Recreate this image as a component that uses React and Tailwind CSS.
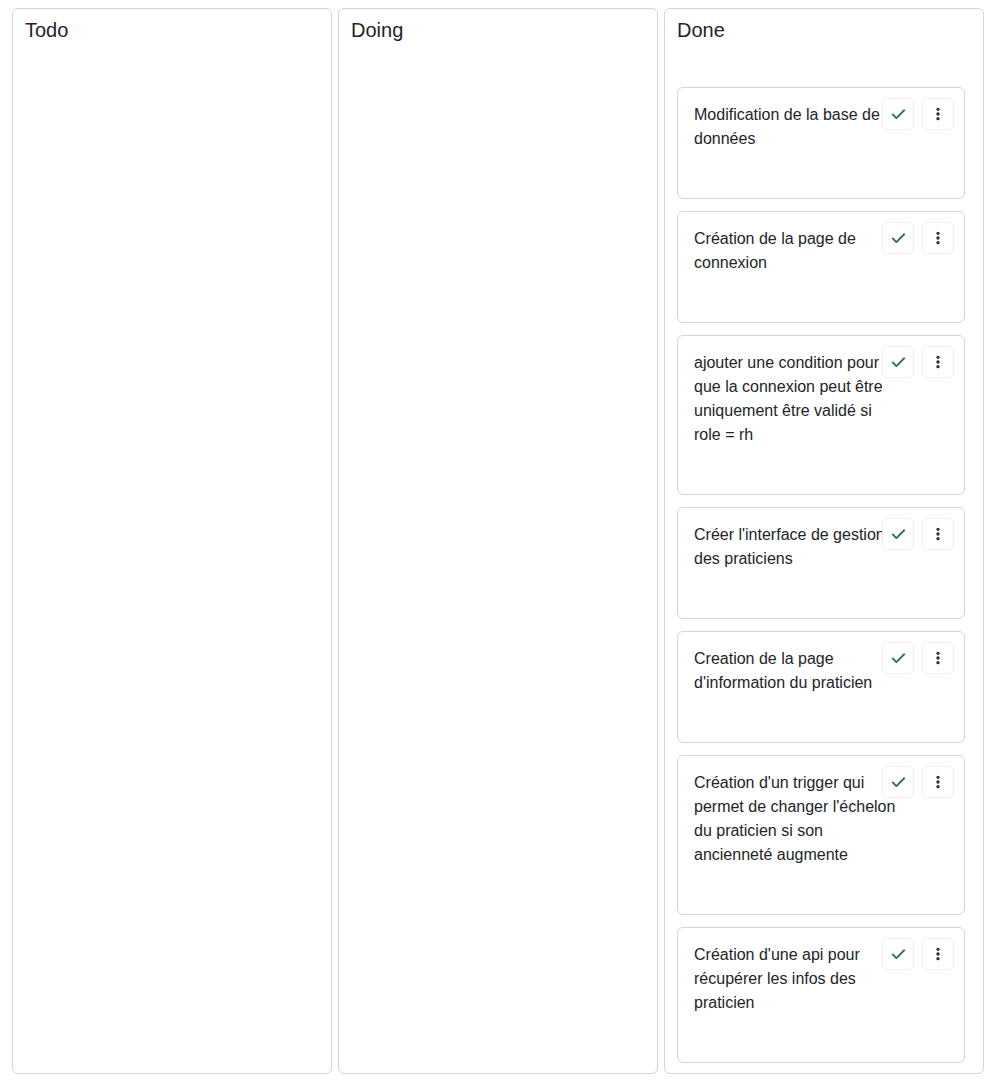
import { Check, EllipsisVertical } from 'lucide-react';

const columns = [
  { title: 'Todo', tasks: [] },
  { title: 'Doing', tasks: [] },
  {
    title: 'Done',
    tasks: [
      'Modification de la base de données',
      'Création de la page de connexion',
      'ajouter une condition pour que la connexion peut être uniquement être validé si role = rh',
      "Créer l'interface de gestion des praticiens",
      "Creation de la page d'information du praticien",
      "Création d'un trigger qui permet de changer l'échelon du praticien si son ancienneté augmente",
      "Création d'une api pour récupérer les infos des praticien",
    ],
  },
];

const TaskCard = ({ text }) => (
  <div className="relative rounded-[6px] border border-[#d4d4d4] bg-white pl-[16px] pr-[15px] pt-[15px] pb-[47px]">
    <p className="w-[204px] text-[16px] leading-[24px] text-[#212529]">{text}</p>
    <div className="absolute right-[10px] top-[10px] flex gap-2">
      <button className="flex h-8 w-8 items-center justify-center rounded-[5px] border border-[#eeeeee] bg-white">
        <Check size={17} strokeWidth={2.5} className="text-[#2a7048]" />
      </button>
      <button className="flex h-8 w-8 items-center justify-center rounded-[5px] border border-[#eeeeee] bg-white">
        <EllipsisVertical size={16} strokeWidth={3} className="text-[#212529]" />
      </button>
    </div>
  </div>
);

const Column = ({ title, tasks }) => (
  <div className="flex h-[1066px] w-[320px] flex-col rounded-[6px] border border-[#d4d4d4] bg-white px-3 pt-[6px]">
    <h2 className="text-[20px] leading-[30px] text-[#212529]">{title}</h2>
    {tasks.length > 0 && (
      <div className="mt-[42px] flex flex-col gap-3 pr-[6px]">
        {tasks.map((t) => (
          <TaskCard key={t} text={t} />
        ))}
      </div>
    )}
  </div>
);

export default function App() {
  return (
    <div className="min-h-screen bg-white pl-3 pt-2 font-['Liberation_Sans',Arial,sans-serif]">
      <div className="flex gap-[6px]">
        {columns.map((c) => (
          <Column key={c.title} title={c.title} tasks={c.tasks} />
        ))}
      </div>
    </div>
  );
}
